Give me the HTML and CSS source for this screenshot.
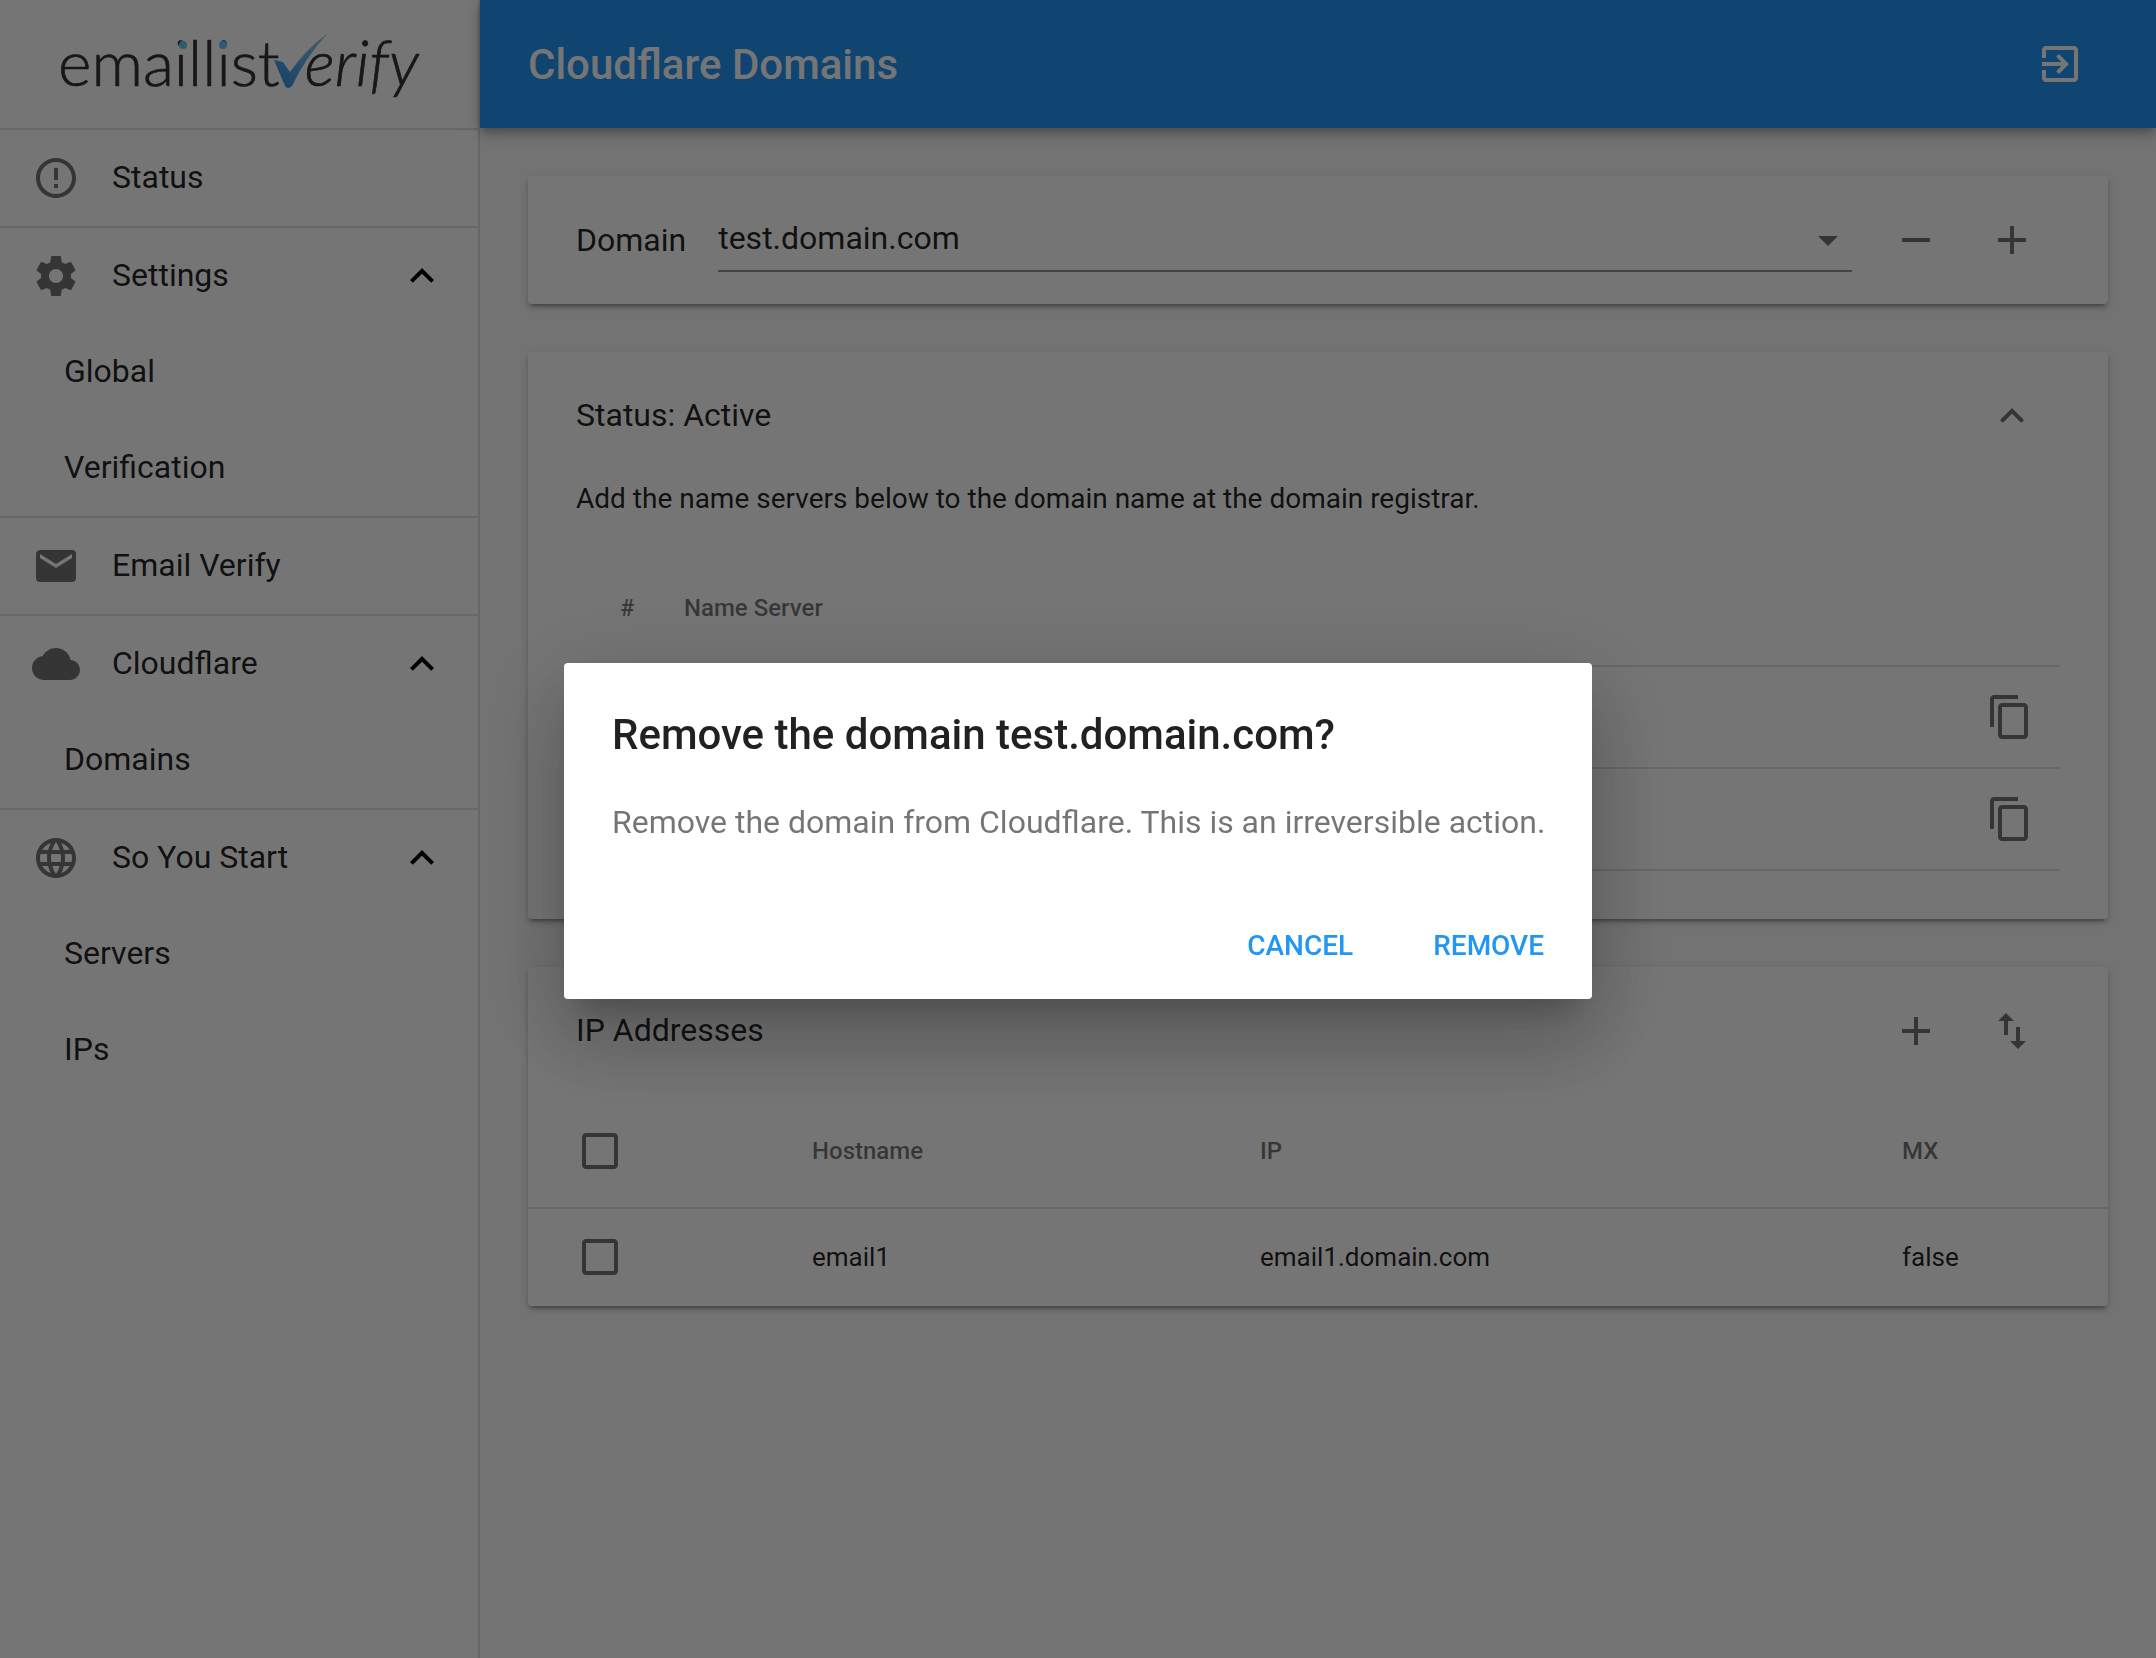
FILE: index.html

```html
<!DOCTYPE html>
<html lang="en">
<head>
  <meta charset="UTF-8">
  <title>Cloudflare Domains</title>
  <link rel="stylesheet" href="styles.css">
</head>
<body>
<div class="app">
  <aside class="sidebar">
    <div class="logo">
      <span class="logo-name">emaillist</span><span class="logo-verify">erify</span>
      <span class="logo-dot dot-one"></span>
      <span class="logo-dot dot-two"></span>
      <svg class="logo-check" viewBox="0 0 56 57"><defs><linearGradient id="checkFill" x1="0" y1="1" x2="1" y2="0"><stop offset="0" stop-color="#2f8ee0"/><stop offset="1" stop-color="#8fd0f0"/></linearGradient></defs><path fill="url(#checkFill)" d="M1 28 L10 30 L17 40 Q32 18 55 1 Q32 26 19 54 Q15 58 12 54 Z"/></svg>
    </div>
    <nav>
      <div class="nav-group">
        <a class="nav-item"><svg class="nav-icon" viewBox="0 0 24 24"><path d="M11 15h2v2h-2zm0-8h2v6h-2zm.99-5C6.47 2 2 6.48 2 12s4.47 10 9.99 10C17.52 22 22 17.52 22 12S17.52 2 11.99 2zM12 20c-4.42 0-8-3.58-8-8s3.58-8 8-8 8 3.58 8 8-3.58 8-8 8z"/></svg><span>Status</span></a>
      </div>
      <div class="nav-group">
        <a class="nav-item"><svg class="nav-icon" viewBox="0 0 24 24"><path d="M19.43 12.98c.04-.32.07-.64.07-.98s-.03-.66-.07-.98l2.11-1.65c.19-.15.24-.42.12-.64l-2-3.46c-.12-.22-.39-.3-.61-.22l-2.49 1c-.52-.4-1.08-.73-1.69-.98l-.38-2.65C14.46 2.18 14.25 2 14 2h-4c-.25 0-.46.18-.49.42l-.38 2.65c-.61.25-1.17.59-1.69.98l-2.49-1c-.23-.09-.49 0-.61.22l-2 3.46c-.13.22-.07.49.12.64l2.11 1.65c-.04.32-.07.65-.07.98s.03.66.07.98l-2.11 1.65c-.19.15-.24.42-.12.64l2 3.46c.12.22.39.3.61.22l2.49-1c.52.4 1.08.73 1.69.98l.38 2.65c.03.24.24.42.49.42h4c.25 0 .46-.18.49-.42l.38-2.65c.61-.25 1.17-.59 1.69-.98l2.49 1c.23.09.49 0 .61-.22l2-3.46c.12-.22.07-.49-.12-.64l-2.11-1.65zM12 15.5c-1.93 0-3.5-1.57-3.5-3.5s1.57-3.5 3.5-3.5 3.5 1.57 3.5 3.5-1.57 3.5-3.5 3.5z"/></svg><span>Settings</span><svg class="nav-chevron" viewBox="0 0 24 24"><path d="M12 8l-6 6 1.41 1.41L12 10.83l4.59 4.58L18 14z"/></svg></a>
        <a class="nav-sub">Global</a>
        <a class="nav-sub">Verification</a>
      </div>
      <div class="nav-group">
        <a class="nav-item"><svg class="nav-icon" viewBox="0 0 24 24"><path d="M20 8l-8 5-8-5V6l8 5 8-5m0-2H4c-1.11 0-2 .89-2 2v12a2 2 0 0 0 2 2h16a2 2 0 0 0 2-2V6a2 2 0 0 0-2-2z"/></svg><span>Email Verify</span></a>
      </div>
      <div class="nav-group">
        <a class="nav-item"><svg class="nav-icon" viewBox="0 0 24 24"><path d="M19.35 10.04C18.67 6.59 15.64 4 12 4 9.11 4 6.6 5.64 5.35 8.04 2.34 8.36 0 10.91 0 14c0 3.31 2.69 6 6 6h13c2.76 0 5-2.24 5-5 0-2.64-2.05-4.78-4.65-4.96z"/></svg><span>Cloudflare</span><svg class="nav-chevron" viewBox="0 0 24 24"><path d="M12 8l-6 6 1.41 1.41L12 10.83l4.59 4.58L18 14z"/></svg></a>
        <a class="nav-sub">Domains</a>
      </div>
      <div class="nav-group last">
        <a class="nav-item"><svg class="nav-icon" viewBox="0 0 24 24"><path d="M11.99 2C6.47 2 2 6.48 2 12s4.47 10 9.99 10C17.52 22 22 17.52 22 12S17.52 2 11.99 2zm6.93 6h-2.95c-.32-1.25-.78-2.45-1.38-3.56 1.84.63 3.37 1.91 4.33 3.56zM12 4.04c.83 1.2 1.48 2.53 1.91 3.96h-3.82c.43-1.43 1.08-2.76 1.91-3.96zM4.26 14C4.1 13.36 4 12.69 4 12s.1-1.36.26-2h3.38c-.08.66-.14 1.32-.14 2 0 .68.06 1.34.14 2H4.26zm.82 2h2.95c.32 1.25.78 2.45 1.38 3.56-1.84-.63-3.37-1.9-4.33-3.56zm2.95-8H5.08c.96-1.66 2.49-2.93 4.33-3.56C8.81 5.55 8.35 6.75 8.03 8zM12 19.96c-.83-1.2-1.48-2.53-1.91-3.96h3.82c-.43 1.43-1.08 2.76-1.91 3.96zM14.34 14H9.66c-.09-.66-.16-1.32-.16-2 0-.68.07-1.35.16-2h4.68c.09.65.16 1.32.16 2 0 .68-.07 1.34-.16 2zm.25 5.56c.6-1.11 1.06-2.31 1.38-3.56h2.95c-.96 1.65-2.49 2.93-4.33 3.56zM16.36 14c.08-.66.14-1.32.14-2 0-.68-.06-1.34-.14-2h3.38c.16.64.26 1.31.26 2s-.1 1.36-.26 2h-3.38z"/></svg><span>So You Start</span><svg class="nav-chevron" viewBox="0 0 24 24"><path d="M12 8l-6 6 1.41 1.41L12 10.83l4.59 4.58L18 14z"/></svg></a>
        <a class="nav-sub">Servers</a>
        <a class="nav-sub">IPs</a>
      </div>
    </nav>
  </aside>

  <div class="content">
    <header class="topbar">
      <h1>Cloudflare Domains</h1>
      <svg class="icon" viewBox="0 0 24 24"><path d="M10.09 15.59L11.5 17l5-5-5-5-1.41 1.41L12.67 11H3v2h9.67l-2.58 2.59zM19 3H5c-1.11 0-2 .9-2 2v4h2V5h14v14H5v-4H3v4c0 1.1.89 2 2 2h14c1.1 0 2-.9 2-2V5c0-1.1-.9-2-2-2z"/></svg>
    </header>

    <main class="main">
      <section class="card card-domain">
        <label class="domain-label">Domain</label>
        <div class="select">
          <span>test.domain.com</span>
          <span class="caret"></span>
        </div>
        <div class="actions">
          <svg class="icon" viewBox="0 0 24 24"><path d="M19 13H5v-2h14v2z"/></svg>
          <svg class="icon" viewBox="0 0 24 24"><path d="M19 13h-6v6h-2v-6H5v-2h6V5h2v6h6v2z"/></svg>
        </div>
      </section>

      <section class="card card-status">
        <div class="card-head">
          <span>Status: Active</span>
          <div class="actions">
            <svg class="icon" viewBox="0 0 24 24"><path d="M12 8l-6 6 1.41 1.41L12 10.83l4.59 4.58L18 14z"/></svg>
          </div>
        </div>
        <p class="hint">Add the name servers below to the domain name at the domain registrar.</p>
        <div class="ns-table">
          <div class="ns-row ns-header"><span class="ns-num">#</span><span>Name Server</span></div>
          <div class="ns-row"><span class="ns-num"></span><span></span><svg class="icon" viewBox="0 0 24 24"><path d="M16 1H4c-1.1 0-2 .9-2 2v14h2V3h12V1zm3 4H8c-1.1 0-2 .9-2 2v14c0 1.1.9 2 2 2h11c1.1 0 2-.9 2-2V7c0-1.1-.9-2-2-2zm0 16H8V7h11v14z"/></svg></div>
          <div class="ns-row"><span class="ns-num"></span><span></span><svg class="icon" viewBox="0 0 24 24"><path d="M16 1H4c-1.1 0-2 .9-2 2v14h2V3h12V1zm3 4H8c-1.1 0-2 .9-2 2v14c0 1.1.9 2 2 2h11c1.1 0 2-.9 2-2V7c0-1.1-.9-2-2-2zm0 16H8V7h11v14z"/></svg></div>
        </div>
      </section>

      <section class="card card-ips">
        <div class="card-head">
          <span>IP Addresses</span>
          <div class="actions">
            <svg class="icon" viewBox="0 0 24 24"><path d="M19 13h-6v6h-2v-6H5v-2h6V5h2v6h6v2z"/></svg>
            <svg class="icon" viewBox="0 0 24 24"><path d="M16 17.01V10h-2v7.01h-3L15 21l4-3.99h-3zM9 3L5 6.99h3V14h2V6.99h3L9 3z"/></svg>
          </div>
        </div>
        <div class="ip-row ip-header">
          <svg class="icon" viewBox="0 0 24 24"><path d="M19 5v14H5V5h14m0-2H5c-1.1 0-2 .9-2 2v14c0 1.1.9 2 2 2h14c1.1 0 2-.9 2-2V5c0-1.1-.9-2-2-2z"/></svg>
          <span>Hostname</span><span>IP</span><span>MX</span>
        </div>
        <div class="ip-row">
          <svg class="icon" viewBox="0 0 24 24"><path d="M19 5v14H5V5h14m0-2H5c-1.1 0-2 .9-2 2v14c0 1.1.9 2 2 2h14c1.1 0 2-.9 2-2V5c0-1.1-.9-2-2-2z"/></svg>
          <span>email1</span><span>email1.domain.com</span><span>false</span>
        </div>
      </section>
    </main>
  </div>
</div>

<div class="scrim">
  <div class="dialog">
    <h2>Remove the domain test.domain.com?</h2>
    <p>Remove the domain from Cloudflare. This is an irreversible action.</p>
    <div class="dialog-actions">
      <button>Cancel</button>
      <button>Remove</button>
    </div>
  </div>
</div>
</body>
</html>
```

FILE: styles.css

```css
* { box-sizing: border-box; }
html, body { height: 100%; }
body {
  margin: 0;
  font-family: Roboto, sans-serif;
  font-size: 32px;
  color: rgba(0, 0, 0, 0.87);
  background: #fafafa;
  overflow: hidden;
}
.app {
  display: flex;
  height: 100%;
}

/* sidebar */
.sidebar {
  width: 480px;
  flex-shrink: 0;
  background: #fff;
  border-right: 2px solid rgba(0, 0, 0, 0.12);
}
.logo {
  position: relative;
  height: 130px;
  padding: 23px 0 0 58px;
  border-bottom: 2px solid rgba(0, 0, 0, 0.12);
  font-family: Lato, sans-serif;
  font-size: 64px;
  font-weight: 300;
  -webkit-text-stroke: 0.7px #333;
  color: #333;
  white-space: nowrap;
}
.logo-verify {
  font-style: italic;
  margin-left: 25px;
}
.logo-dot {
  position: absolute;
  top: 41px;
  width: 8px;
  height: 8px;
  border-radius: 50%;
  background: #5fc8f5;
}
.dot-one { left: 179px; }
.dot-two { left: 219px; }
.logo-check {
  position: absolute;
  left: 273px;
  top: 32px;
  width: 56px;
  height: 57px;
}
.nav-group {
  border-bottom: 2px solid rgba(0, 0, 0, 0.12);
}
.nav-group.last { border-bottom: none; }
.nav-item {
  display: flex;
  align-items: center;
  height: 96px;
  padding: 0 32px;
}
.nav-item span { padding-bottom: 3px; }
.nav-icon {
  width: 48px;
  height: 48px;
  margin-right: 32px;
  fill: rgba(0, 0, 0, 0.54);
}
.nav-chevron {
  width: 48px;
  height: 48px;
  margin-left: auto;
  fill: #000;
}
.nav-sub {
  display: flex;
  align-items: center;
  height: 96px;
  padding: 0 0 3px 64px;
}

/* main area */
.content {
  flex: 1;
  min-width: 0;
}
.topbar {
  display: flex;
  align-items: center;
  justify-content: space-between;
  height: 128px;
  padding: 0 72px 0 48px;
  background: #2196f3;
  color: #fff;
  box-shadow: 0 4px 8px -2px rgba(0, 0, 0, 0.2), 0 8px 10px 0 rgba(0, 0, 0, 0.14), 0 2px 20px 0 rgba(0, 0, 0, 0.12);
}
.topbar h1 {
  margin: 0;
  font-size: 42px;
  font-weight: 500;
}
.topbar .icon { fill: #fff; }
.main {
  display: flex;
  flex-direction: column;
  gap: 48px;
  padding: 48px;
}
.card {
  background: #fff;
  border-radius: 4px;
  box-shadow: 0 6px 2px -4px rgba(0, 0, 0, 0.2), 0 4px 4px 0 rgba(0, 0, 0, 0.14), 0 2px 10px 0 rgba(0, 0, 0, 0.12);
}
.icon {
  display: block;
  width: 48px;
  height: 48px;
  flex-shrink: 0;
  fill: rgba(0, 0, 0, 0.54);
}
.actions {
  display: flex;
  gap: 48px;
}

.card-domain {
  display: flex;
  align-items: center;
  height: 128px;
  padding-left: 48px;
}
.domain-label { margin-right: 32px; }
.select {
  display: flex;
  align-items: center;
  justify-content: space-between;
  width: 1134px;
  height: 66px;
  margin-top: -2px;
  margin-right: 40px;
  padding: 0 14px 0 0;
  border-bottom: 2px solid rgba(0, 0, 0, 0.42);
}
.caret {
  width: 0;
  height: 0;
  margin-top: 6px;
  border-left: 10px solid transparent;
  border-right: 10px solid transparent;
  border-top: 10px solid rgba(0, 0, 0, 0.54);
}

.card-head {
  display: flex;
  align-items: center;
  justify-content: space-between;
  height: 128px;
  padding: 0 72px 0 48px;
}
.card-head > span { padding-bottom: 2px; }
.card-status { padding-bottom: 48px; }
.hint {
  margin: 0 48px;
  font-size: 28px;
  line-height: 38px;
}
.ns-table { margin: 33px 48px 0; }
.ns-row {
  display: grid;
  grid-template-columns: 108px 1fr 48px 26px;
  align-items: center;
  height: 102px;
  border-bottom: 2px solid rgba(0, 0, 0, 0.12);
}
.ns-row > .icon { grid-column: 3; }
.ns-num { padding-left: 44px; }
.ns-header {
  grid-template-columns: 108px 1fr;
  height: 116px;
  font-size: 24px;
  font-weight: 500;
  color: rgba(0, 0, 0, 0.54);
}

.card-ips { padding-bottom: 2px; }
.ip-row {
  display: grid;
  grid-template-columns: 236px 448px 642px 1fr;
  align-items: center;
  height: 95px;
  padding-left: 48px;
  font-size: 26px;
}
.ip-header {
  height: 114px;
  font-size: 24px;
  font-weight: 500;
  color: rgba(0, 0, 0, 0.54);
  border-bottom: 2px solid rgba(0, 0, 0, 0.12);
}

/* dialog over a dimmed page */
.scrim {
  position: fixed;
  top: 0; right: 0; bottom: 0; left: 0;
  display: flex;
  justify-content: center;
  align-items: center;
  padding-top: 4px;
  background: rgba(0, 0, 0, 0.54);
}
.dialog {
  width: 1028px;
  height: 336px;
  padding: 48px;
  background: #fff;
  border-radius: 4px;
  box-shadow: 0 22px 28px -14px rgba(0, 0, 0, 0.2), 0 48px 76px 6px rgba(0, 0, 0, 0.14), 0 18px 92px 16px rgba(0, 0, 0, 0.12);
}
.dialog h2 {
  margin: 0;
  font-size: 42px;
  line-height: 48px;
  font-weight: 500;
}
.dialog p {
  margin: 39px 0 0;
  font-size: 32px;
  line-height: 48px;
  color: rgba(0, 0, 0, 0.54);
  white-space: nowrap;
}
.dialog-actions {
  display: flex;
  justify-content: flex-end;
  gap: 80px;
  margin-top: 83px;
}
.dialog button {
  padding: 0;
  border: none;
  background: none;
  font-family: Roboto, sans-serif;
  font-size: 28px;
  font-weight: 500;
  text-transform: uppercase;
  color: #2196f3;
}
```
